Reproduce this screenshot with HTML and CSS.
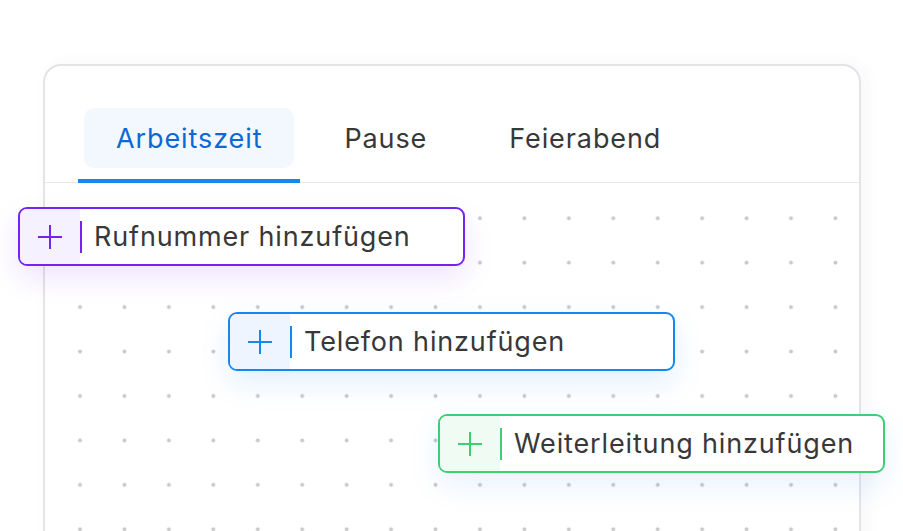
FILE: index.html
```html
<!DOCTYPE html>
<html lang="de">

<head>
    <meta charset="UTF-8">
    <meta name="viewport" content="width=device-width, initial-scale=1.0">
    <title>Rufumleitung</title>
    <link rel="stylesheet" href="styles.css">
</head>

<body>

    <div class="stage">
        <div class="card">
            <div class="tabs">
                <button class="tab active"><span class="tab-label">Arbeitszeit</span></button>
                <button class="tab"><span class="tab-label">Pause</span></button>
                <button class="tab"><span class="tab-label">Feierabend</span></button>
            </div>
            <div class="canvas"></div>
        </div>

        <!-- floating actions over the card -->
        <div class="actions">
            <div class="action action-purple">
                <span class="action-icon">
                    <svg width="26" height="26" viewBox="0 0 26 26"><path d="M13 1v24M1 13h24" /></svg>
                </span>
                <span class="action-caret"></span>
                <span class="action-text">Rufnummer hinzufügen</span>
            </div>
            <div class="action action-blue">
                <span class="action-icon">
                    <svg width="26" height="26" viewBox="0 0 26 26"><path d="M13 1v24M1 13h24" /></svg>
                </span>
                <span class="action-caret"></span>
                <span class="action-text">Telefon hinzufügen</span>
            </div>
            <div class="action action-green">
                <span class="action-icon">
                    <svg width="26" height="26" viewBox="0 0 26 26"><path d="M13 1v24M1 13h24" /></svg>
                </span>
                <span class="action-caret"></span>
                <span class="action-text">Weiterleitung hinzufügen</span>
            </div>
        </div>
    </div>

</body>

</html>
```

FILE: styles.css
```css
body {
    margin: 0;
    background: #fff;
    font-family: Inter, "Noto Sans", sans-serif;
    overflow: hidden;
}

.stage {
    position: relative;
    width: 903px;
    height: 531px;
    overflow: hidden;
}

.card {
    margin: 64px 0 0 43px;
    width: 814px;
    height: 520px;
    border: 2px solid #e4e4e6;
    border-radius: 18px;
    background: #fff;
    box-shadow: 6px 0 18px rgba(40, 60, 120, 0.04);
    overflow: hidden;
}

.tabs {
    display: flex;
    gap: 6px;
    padding: 42px 0 0 33px;
    border-bottom: 1px solid #e8e8ea;
}

.tab {
    margin: 0 0 -1px;
    padding: 0 6px 11px;
    border: 0;
    border-bottom: 4px solid transparent;
    background: none;
    font: inherit;
    cursor: pointer;
}

.tab-label {
    display: flex;
    align-items: center;
    height: 60px;
    padding: 0 32px;
    border-radius: 10px;
    font-size: 27px;
    letter-spacing: 0.9px;
    color: #383838;
}

.tab.active {
    border-bottom-color: #1787f0;
}

.tab.active .tab-label {
    background: #f3f8fe;
    color: #0b69d6;
}

.canvas {
    height: 360px;
    background-image: radial-gradient(circle, #c9c9cc 1.7px, transparent 2.3px);
    background-size: 44.44px 44.44px;
    background-position: 12.8px 13px;
}

.actions {
    position: absolute;
    top: 207px;
    left: 18px;
    display: flex;
    flex-direction: column;
}

.action {
    display: flex;
    align-items: center;
    box-sizing: border-box;
    width: 447px;
    height: 59px;
    border: 2px solid;
    border-radius: 9px;
    background: #fff;
    overflow: hidden;
}

.action-icon {
    display: flex;
    align-items: center;
    justify-content: center;
    width: 60px;
    align-self: stretch;
}

.action-icon svg {
    fill: none;
    stroke: currentColor;
    stroke-width: 2;
}

.action-caret {
    width: 2px;
    height: 32px;
    margin-right: 12px;
    background: currentColor;
}

.action-text {
    font-size: 27px;
    letter-spacing: 0.85px;
    color: #383838;
}

.action-purple {
    color: #7424f0;
    border-color: #7424f0;
    box-shadow: 0 12px 30px rgba(116, 36, 240, 0.12);
}

.action-purple .action-icon {
    background: #f6f1fe;
}

.action-blue {
    margin: 46px 0 0 210px;
    color: #1787f0;
    border-color: #1787f0;
    box-shadow: 0 12px 30px rgba(23, 135, 240, 0.12);
}

.action-blue .action-icon {
    background: #eef5fe;
}

.action-green {
    margin: 43px 0 0 420px;
    color: #3ccf74;
    border-color: #3ccf74;
    box-shadow: 0 12px 30px rgba(23, 135, 240, 0.11);
}

.action-green .action-icon {
    background: #f0fbf4;
}
```
